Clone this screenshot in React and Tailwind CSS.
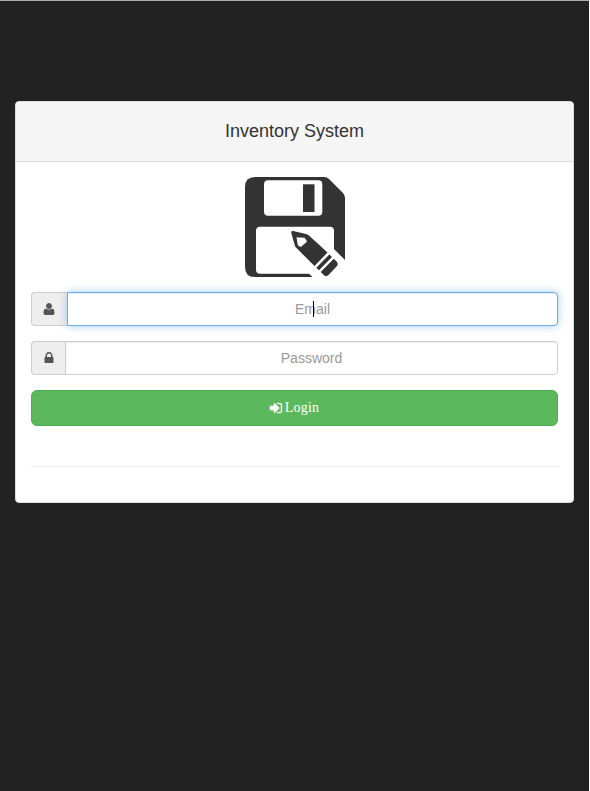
function Icon({ d, className }) {
  return (
    <svg viewBox="0 0 1792 1792" fill="currentColor" className={className} aria-hidden="true">
      <path d={d} />
    </svg>
  );
}

const USER =
  "M1600 1405q0 120-73 189.5t-194 69.5h-874q-121 0-194-69.5t-73-189.5q0-53 3.500-103.500t14-109 26.500-108.500 43-97.500 62-81 85.500-53.500 111.500-20q9 0 42 21.500t74.500 48 108 48 133.500 21.500 133.500-21.500 108-48 74.500-48 42-21.500q61 0 111.500 20t85.500 53.500 62 81 43 97.500 26.500 108.500 14 109 3.500 103.500zm-320-893q0 159-112.500 271.500t-271.500 112.500-271.500-112.500-112.500-271.500 112.500-271.500 271.500-112.500 271.500 112.500 112.500 271.500z";
const LOCK =
  "M640 768h512v-192q0-106-75-181t-181-75-181 75-75 181v192zm832 96v576q0 40-28 68t-68 28h-960q-40 0-68-28t-28-68v-576q0-40 28-68t68-28h32v-192q0-184 132-316t316-132 316 132 132 316v192h32q40 0 68 28t28 68z";
const SIGN_IN =
  "M1312 896q0 26-19 45l-544 544q-19 19-45 19t-45-19-19-45v-288h-448q-26 0-45-19t-19-45v-384q0-26 19-45t45-19h448v-288q0-26 19-45t45-19 45 19l544 544q19 19 19 45zm352-352v704q0 119-84.5 203.5t-203.5 84.5h-320q-13 0-22.5-9.5t-9.5-22.5q-1-4-1-20t-.5-26.5 3-23.5 10-19.5 20.5-6.5h320q66 0 113-47t47-113v-704q0-66-47-113t-113-47h-312l-11.5-1-11.5-3-8-5.5-7-9-2-13.5q-1-4-1-20t-.5-26.5 3-23.5 10-19.5 20.5-6.5h320q119 0 203.5 84.5t84.5 203.5z";

function Logo() {
  return (
    <svg viewBox="0 0 100 100" className="mx-auto block size-[100px]" aria-hidden="true">
      <path fill="#333" d="M10 0H79Q82 0 84 2L98 16Q100 18 100 21V83L67 100H10Q0 100 0 90V10Q0 0 10 0Z" />
      <rect x="19" y="3.3" width="58.3" height="35.5" rx="4" fill="#fff" />
      <rect x="58" y="7.3" width="11.5" height="27.7" fill="#333" />
      <path fill="#fff" d="M15 49.700H85Q89 49.700 89 53.700V72L100 83V100H67.500L64 96.700H15Q11 96.700 11 92.700V53.700Q11 49.700 15 49.700Z" />
      <path fill="#333" d="M48 54L61 57Q63 57.500 64.500 59L82.500 75.500L69.500 89L51 70.500Q50 69.500 49.700 68L46.300 56Q46 53.500 48 54Z" />
      <path fill="#fff" d="M51.500 60.300L59.500 60.800L62 64.300L60.500 66L55.800 70L52.800 68.300Z" />
      <path fill="#333" d="M84.300 77.500L87 80L74 93.300L71.300 90.800Z" />
      <path fill="#333" d="M88.800 81.700L92 85Q93.500 87 92 89L83.500 98Q81.500 100 79.300 98.500L75.700 95Z" />
    </svg>
  );
}

export default function App() {
  return (
    <div className="h-[791px] w-[590px] border-t border-r border-t-[#a9acaa] border-r-white bg-[#222] px-[15px] pt-[100px] font-['Liberation_Sans',Arial,sans-serif] text-sm text-[#333]">
      <main className="h-[402px] w-[559px] overflow-hidden rounded border border-[#ddd] bg-white">
        <header className="flex h-[60px] items-center justify-center border-b border-[#ddd] bg-[#f5f5f5] pb-0.5">
          <h1 className="text-lg leading-5">Inventory System</h1>
        </header>
        <form className="flex flex-col gap-[15px] p-[15px]">
          <Logo />
          <div className="flex h-[34px]">
            <span className="flex w-9 items-center justify-center rounded-l border border-r-0 border-[#ccc] bg-[#eee] pr-px text-[#555]">
              <Icon d={USER} className="size-3.5" />
            </span>
            <div className="relative flex flex-1 items-center justify-center rounded-r border border-[#66afe9] bg-white text-[#999] shadow-[inset_0_1px_1px_rgba(0,0,0,0.075),0_0_8px_rgba(102,175,233,0.6)]">
              Email
              <span className="absolute top-[8px] left-[245px] h-4 w-px bg-black" />
            </div>
          </div>
          <div className="flex h-[34px]">
            <span className="flex w-[34px] items-center justify-center rounded-l border border-r-0 border-[#ccc] bg-[#eee] text-[#555]">
              <Icon d={LOCK} className="size-3.5" />
            </span>
            <div className="flex flex-1 items-center justify-center rounded-r border border-[#ccc] bg-white text-[#999] shadow-[inset_0_1px_1px_rgba(0,0,0,0.075)]">
              Password
            </div>
          </div>
          <button
            type="button"
            className="flex h-9 items-center justify-center gap-[2px] rounded-md border border-[#4cae4c] bg-[#5cb85c] pr-px font-['Liberation_Serif','Times_New_Roman',serif] text-sm tracking-[0.2px] text-white"
          >
            <Icon d={SIGN_IN} className="size-3.5 stroke-current stroke-[60]" />
            Login
          </button>
          <hr className="mt-[25px] border-[#eee]" />
        </form>
      </main>
    </div>
  );
}
